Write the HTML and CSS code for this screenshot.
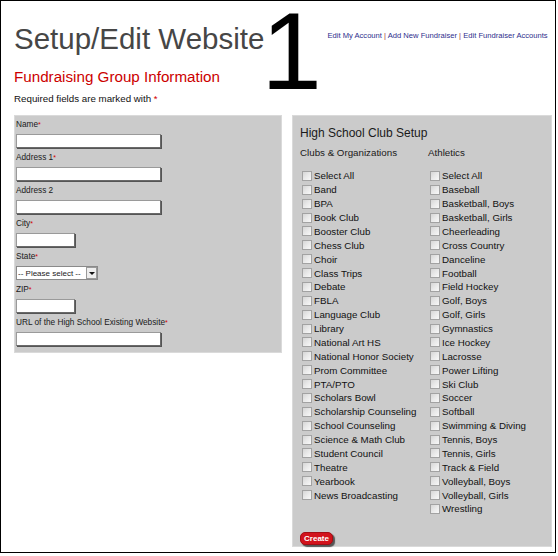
FILE: index.html
```html
<!DOCTYPE html>
<html lang="en">
<head>
<meta charset="utf-8">
<title>Setup/Edit Website</title>
<link rel="stylesheet" href="styles.css">
</head>
<body>
<div class="frame">
  <header class="top">
    <div class="heads">
      <h1 class="title">Setup/Edit Website</h1>
      <h2 class="subtitle">Fundraising Group Information</h2>
      <p class="req">Required fields are marked with <span class="star">*</span></p>
    </div>
    <div class="step">1</div>
    <nav class="links"><a href="#">Edit My Account</a> <span class="sep">|</span> <a href="#">Add New Fundraiser</a> <span class="sep">|</span> <a href="#">Edit Fundraiser Accounts</a></nav>
  </header>

  <div class="panels">
    <form class="panel info">
      <label class="flabel" for="f-name">Name<span class="star">*</span></label>
      <input class="field wide" id="f-name" type="text">
      <label class="flabel" for="f-addr1">Address 1<span class="star">*</span></label>
      <input class="field wide" id="f-addr1" type="text">
      <label class="flabel" for="f-addr2">Address 2</label>
      <input class="field wide" id="f-addr2" type="text">
      <label class="flabel" for="f-city">City<span class="star">*</span></label>
      <input class="field short" id="f-city" type="text">
      <label class="flabel" for="f-state">State<span class="star">*</span></label>
      <div class="selectbox">
        <select id="f-state"><option>-- Please select --</option></select>
        <span class="arrow"></span>
      </div>
      <label class="flabel" for="f-zip">ZIP<span class="star">*</span></label>
      <input class="field short" id="f-zip" type="text">
      <label class="flabel" for="f-url">URL of the High School Existing Website<span class="star">*</span></label>
      <input class="field wide" id="f-url" type="text">
    </form>

    <div class="panel clubs">
      <h3 class="clubs-title">High School Club Setup</h3>
      <div class="cols">
        <div class="col first">
          <h4 class="col-title">Clubs &amp; Organizations</h4>
          <ul class="checks">
            <li><input type="checkbox"><span>Select All</span></li>
            <li><input type="checkbox"><span>Band</span></li>
            <li><input type="checkbox"><span>BPA</span></li>
            <li><input type="checkbox"><span>Book Club</span></li>
            <li><input type="checkbox"><span>Booster Club</span></li>
            <li><input type="checkbox"><span>Chess Club</span></li>
            <li><input type="checkbox"><span>Choir</span></li>
            <li><input type="checkbox"><span>Class Trips</span></li>
            <li><input type="checkbox"><span>Debate</span></li>
            <li><input type="checkbox"><span>FBLA</span></li>
            <li><input type="checkbox"><span>Language Club</span></li>
            <li><input type="checkbox"><span>Library</span></li>
            <li><input type="checkbox"><span>National Art HS</span></li>
            <li><input type="checkbox"><span>National Honor Society</span></li>
            <li><input type="checkbox"><span>Prom Committee</span></li>
            <li><input type="checkbox"><span>PTA/PTO</span></li>
            <li><input type="checkbox"><span>Scholars Bowl</span></li>
            <li><input type="checkbox"><span>Scholarship Counseling</span></li>
            <li><input type="checkbox"><span>School Counseling</span></li>
            <li><input type="checkbox"><span>Science &amp; Math Club</span></li>
            <li><input type="checkbox"><span>Student Council</span></li>
            <li><input type="checkbox"><span>Theatre</span></li>
            <li><input type="checkbox"><span>Yearbook</span></li>
            <li><input type="checkbox"><span>News Broadcasting</span></li>
          </ul>
        </div>
        <div class="col second">
          <h4 class="col-title">Athletics</h4>
          <ul class="checks">
            <li><input type="checkbox"><span>Select All</span></li>
            <li><input type="checkbox"><span>Baseball</span></li>
            <li><input type="checkbox"><span>Basketball, Boys</span></li>
            <li><input type="checkbox"><span>Basketball, Girls</span></li>
            <li><input type="checkbox"><span>Cheerleading</span></li>
            <li><input type="checkbox"><span>Cross Country</span></li>
            <li><input type="checkbox"><span>Danceline</span></li>
            <li><input type="checkbox"><span>Football</span></li>
            <li><input type="checkbox"><span>Field Hockey</span></li>
            <li><input type="checkbox"><span>Golf, Boys</span></li>
            <li><input type="checkbox"><span>Golf, Girls</span></li>
            <li><input type="checkbox"><span>Gymnastics</span></li>
            <li><input type="checkbox"><span>Ice Hockey</span></li>
            <li><input type="checkbox"><span>Lacrosse</span></li>
            <li><input type="checkbox"><span>Power Lifting</span></li>
            <li><input type="checkbox"><span>Ski Club</span></li>
            <li><input type="checkbox"><span>Soccer</span></li>
            <li><input type="checkbox"><span>Softball</span></li>
            <li><input type="checkbox"><span>Swimming &amp; Diving</span></li>
            <li><input type="checkbox"><span>Tennis, Boys</span></li>
            <li><input type="checkbox"><span>Tennis, Girls</span></li>
            <li><input type="checkbox"><span>Track &amp; Field</span></li>
            <li><input type="checkbox"><span>Volleyball, Boys</span></li>
            <li><input type="checkbox"><span>Volleyball, Girls</span></li>
            <li><input type="checkbox"><span>Wrestling</span></li>
          </ul>
        </div>
      </div>
      <button class="create" type="button">Create</button>
    </div>
  </div>
</div>
</body>
</html>
```

FILE: styles.css
```css
* { box-sizing: border-box; }

html, body {
  margin: 0;
  padding: 0;
  background: #fff;
}

body {
  font-family: "Liberation Sans", Arial, sans-serif;
  color: #111;
}

.frame {
  width: 556px;
  height: 553px;
  border: 1px solid #000;
  padding-left: 13px;
}

/* header */
.top {
  display: flex;
  align-items: flex-start;
  height: 104px;
}

.heads {
  padding-top: 21px;
}

.title {
  margin: 0;
  font-size: 29.5px;
  line-height: 34px;
  font-weight: normal;
  color: #464646;
  white-space: nowrap;
}

.subtitle {
  margin: 12px 0 0;
  font-size: 15.2px;
  line-height: 18px;
  font-weight: normal;
  color: #cc0000;
  white-space: nowrap;
}

.req {
  margin: 7px 0 0;
  font-size: 9.75px;
  line-height: 12px;
  color: #111;
  white-space: nowrap;
}

.star {
  color: #d40000;
}

.step {
  margin: 0 0 0 -3px;
  font-size: 109px;
  line-height: 100px;
  color: #000;
}

.links {
  margin: 30px 0 0 5.5px;
  font-size: 7.6px;
  line-height: 9px;
  white-space: nowrap;
}

.links a {
  color: #2e2e8c;
  text-decoration: none;
}

.sep {
  color: #a33a3a;
}

/* panels */
.panels {
  display: flex;
  align-items: flex-start;
  margin-top: 10px;
}

.panel {
  background: #cbcbcb;
  border: 1px solid #dadada;
}

.info {
  width: 268px;
  margin: 0 10px 0 0;
  padding: 3px 1px 2px;
}

.flabel {
  display: block;
  font-size: 8.25px;
  line-height: 12px;
  color: #1a1a1a;
  white-space: nowrap;
}

.flabel .star {
  font-size: 7px;
  vertical-align: top;
}

.field {
  display: block;
  height: 14px;
  margin: 3px 0 4px;
  padding: 0;
  background: #fff;
  border: 1px solid #9a9a9a;
  border-right-color: #6a6a6a;
  border-bottom-color: #6a6a6a;
  box-shadow: 1px 1px 0 #555;
}

.wide { width: 145px; }
.short { width: 59px; }

.selectbox {
  position: relative;
  width: 82px;
  height: 14px;
  margin: 3px 0 4px;
}

.selectbox select {
  appearance: none;
  -webkit-appearance: none;
  display: block;
  width: 100%;
  height: 100%;
  margin: 0;
  padding: 0 0 0 1px;
  border: 1px solid #8a8a8a;
  border-radius: 0;
  background: #fff;
  font-family: "Liberation Sans", Arial, sans-serif;
  font-size: 8px;
  color: #222;
}

.arrow {
  position: absolute;
  top: 1px;
  right: 1px;
  width: 11px;
  height: 12px;
  border: 1px solid #9a9a9a;
  background: #eeeeee;
  pointer-events: none;
}

.arrow::after {
  content: "";
  position: absolute;
  left: 2px;
  top: 4px;
  border-left: 3px solid transparent;
  border-right: 3px solid transparent;
  border-top: 3px solid #111;
}

.clubs {
  width: 260px;
  padding: 10px 0 1px 7px;
}

.clubs-title {
  margin: 0;
  font-size: 12px;
  line-height: 14px;
  font-weight: normal;
  color: #1a1a1a;
}

.cols {
  display: flex;
  margin-top: 7px;
}

.col.first { width: 128px; }
.col.second { flex: 1; }

.col-title {
  margin: 0 0 10px;
  font-size: 9.75px;
  line-height: 12px;
  font-weight: normal;
  color: #1a1a1a;
  white-space: nowrap;
}

.checks {
  list-style: none;
  margin: 0;
  padding: 0;
}

.checks li {
  display: flex;
  align-items: center;
  height: 13.875px;
  font-size: 9.75px;
  color: #111;
  white-space: nowrap;
}

.checks input {
  appearance: none;
  -webkit-appearance: none;
  flex: none;
  width: 10px;
  height: 10px;
  margin: 0 2px 0 2px;
  border: 1px solid #a2a2a2;
  border-radius: 0;
  background: linear-gradient(135deg, #d6d6d6 0%, #e9e9e9 50%, #f8f8f8 100%);
}

.create {
  display: block;
  width: 33px;
  height: 13px;
  margin-top: 16px;
  padding: 0;
  border: 1px solid #a20e14;
  border-radius: 5px;
  background: #d2131c;
  color: #fff;
  font-family: "Liberation Sans", Arial, sans-serif;
  font-size: 8px;
  font-weight: bold;
  line-height: 11px;
  box-shadow: 2px 2px 1px #555;
}
```
